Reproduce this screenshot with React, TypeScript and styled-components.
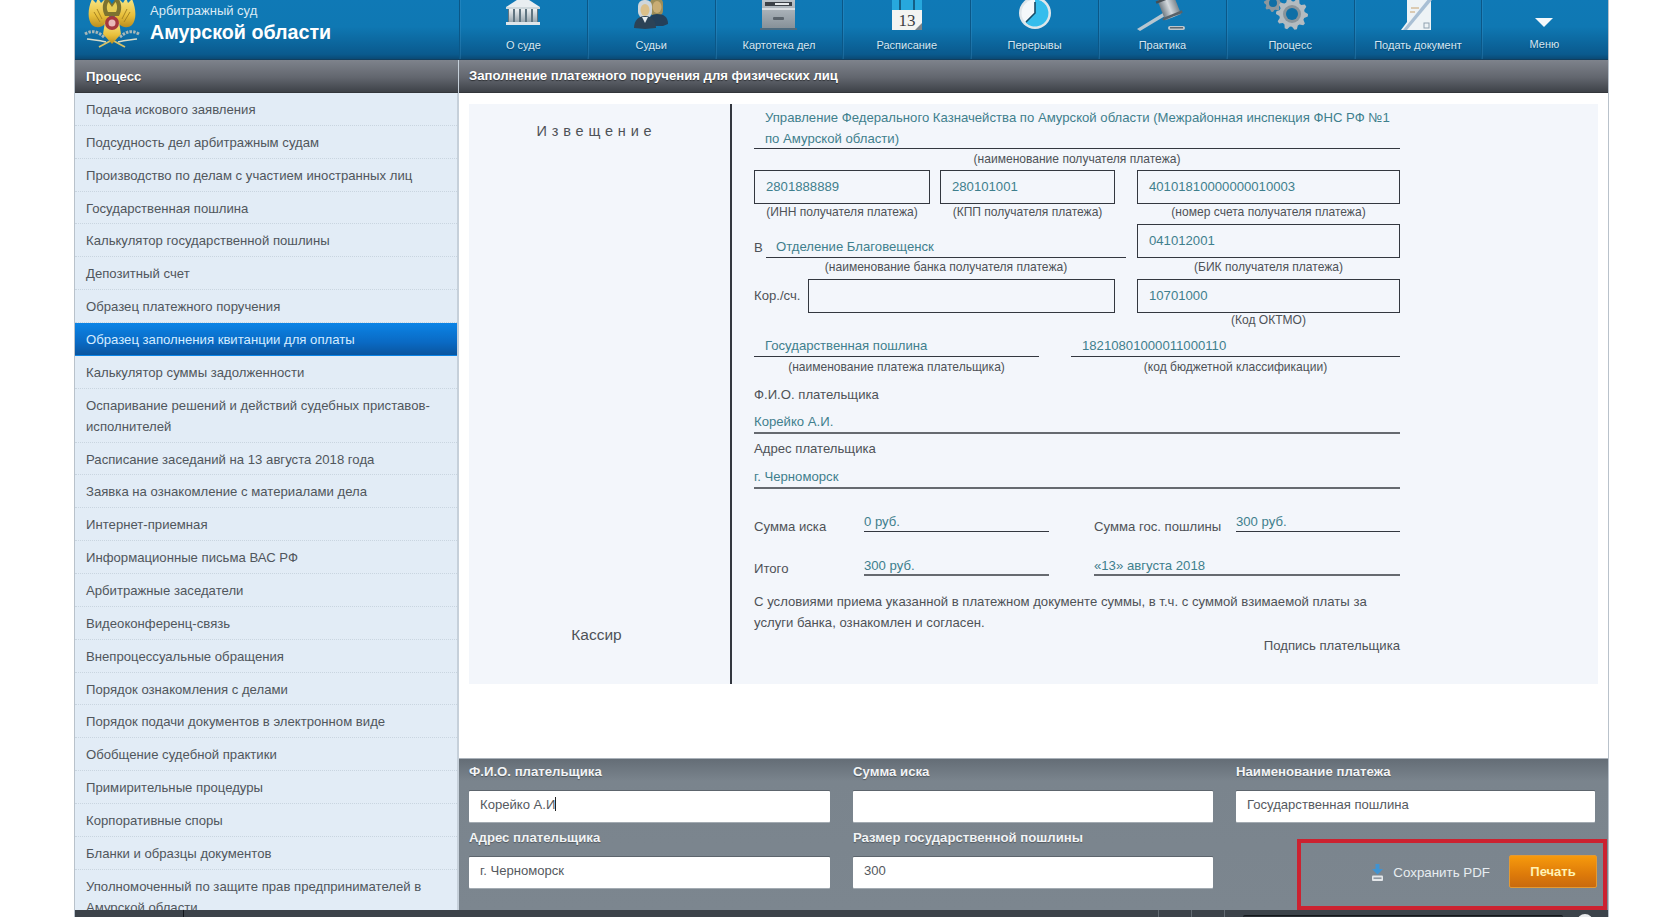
import React from "react";
import styled, { createGlobalStyle } from "styled-components";

const Global = createGlobalStyle`
  html, body { margin: 0; padding: 0; background: #fff; height: 100%; overflow: hidden; }
  #root { height: 917px; }
  * { box-sizing: border-box; }
`;

const Page = styled.div`
  width: 1680px; height: 917px; padding-left: 74px; overflow: hidden;
  font-family: "Liberation Sans", Arial, sans-serif; font-size: 13.15px; color: #4a4f55;
`;
const Shell = styled.div`
  width: 1535px; height: 917px; display: flex; flex-direction: column;
  border-left: 1px solid #b9c2cb; border-right: 1px solid #b9c2cb;
`;
const Header = styled.header`
  flex: 0 0 60px; display: flex;
  background: linear-gradient(#0f79b6 0%, #0f78b3 45%, #0a5a8e 92%, #0a4a75 100%);
  border-bottom: 1px solid #123f5f; overflow: hidden;
`;
const Brand = styled.div`
  flex: 0 0 384px; display: flex; align-items: flex-start; padding-left: 8px; gap: 9px;
`;
const BrandText = styled.div`
  padding-top: 2px; color: #fff;
`;
const CourtKind = styled.div`
  font-size: 13px; line-height: 18px; color: #dcebf5;
`;
const CourtName = styled.div`
  font-size: 19.7px; line-height: 24px; font-weight: 700; color: #fff;
`;
const NavItem = styled.a<{ $wide?: boolean }>`
  flex: 0 0 ${p => (p.$wide ? "125px" : "127.8px")}; display: flex; flex-direction: column; align-items: center;
  border-left: 1px solid #0b5787; box-shadow: inset 1px 0 0 rgba(90,170,220,.22);
`;
const IconSlot = styled.div<{ $short?: boolean }>`
  height: ${p => (p.$short ? 38 : 39)}px; display: flex; align-items: flex-start; justify-content: center;
`;
const NavLabel = styled.span`
  font-size: 11px; line-height: 13px; color: #d5e7f3; text-shadow: 0 1px 1px rgba(0,40,70,.5);
`;
const MenuArrow = styled.i`
  display: block; width: 0; height: 0; margin-top: 18px;
  border-left: 9px solid transparent; border-right: 9px solid transparent; border-top: 9px solid #f4f8fb;
`;
const Body = styled.div`
  flex: 1; display: flex; min-height: 0;
`;
const Side = styled.aside`
  flex: 0 0 383px; display: flex; flex-direction: column; overflow: hidden;
  background: #e2ecf6;
`;
const TitleBar = styled.div`
  flex: 0 0 33px; display: flex; align-items: center; padding-left: 11px;
  font-weight: 700; font-size: 13.15px; color: #fff; text-shadow: 0 1px 1px rgba(0,0,0,.5);
  background: linear-gradient(#7e838c, #62666e 55%, #3e4248);
  border-bottom: 1px solid #33363b;
`;
const MainTitle = styled(TitleBar)`
  padding-left: 10px; margin-top: 0; align-items: flex-start; padding-top: 8px; line-height: 15px;
`;
const MenuList = styled.nav`
  flex: 1; overflow: hidden; border-right: 1px solid #c6d0da;
`;
const MenuRow = styled.a<{ $active?: boolean; $double?: boolean }>`
  display: block; padding: 6px 20px 0 11px; line-height: 21px; font-size: 13.15px;
  height: ${p => (p.$double ? "53.86px" : "32.86px")};
  color: ${p => (p.$active ? "#d4ecff" : "#50565c")};
  background: ${p => (p.$active ? "linear-gradient(#0b84e6, #0a6ac4 60%, #0a559f)" : "transparent")};
  border-bottom: 1px dotted ${p => (p.$active ? "transparent" : "#c9d5e0")};
`;
const Main = styled.main`
  flex: 1; display: flex; flex-direction: column; min-width: 0;
  border-left: 1px solid #c6d0da;
`;
const Sheet = styled.div`
  flex: 1; padding: 11px 10px 0 10px; background: #fff;
`;
const Card = styled.div`
  height: 580px; display: flex; background: #f3f6fb;
`;
const Stub = styled.div`
  flex: 0 0 263px; border-right: 2px solid #33373f; display: flex; flex-direction: column;
  justify-content: space-between; align-items: center; padding: 17px 6px 39px 0;
`;
const StubTitle = styled.div`
  font-size: 14.5px; line-height: 20px; letter-spacing: 4.8px; color: #4e5257;
`;
const Cashier = styled.div`
  font-size: 15.5px; line-height: 20px; color: #4e5257;
`;
const Form = styled.div`
  margin-left: 22px; width: 646px; padding-top: 3px;
`;
const Recipient = styled.div`
  padding-left: 11px; line-height: 21px; color: #3f7f8d; font-size: 13.15px;
  border-bottom: 1px solid #33373f; height: 42px;
`;
const Caption = styled.div<{ $h?: number; $shift?: number }>`
  font-size: 12.05px; line-height: ${p => p.$h ?? 16}px; height: ${p => p.$h ?? 16}px; text-align: center; color: #4e5257;
  white-space: nowrap; padding-left: ${p => p.$shift ?? 0}px;
`;
const FieldRow = styled.div<{ $top?: number }>`
  display: flex; margin-top: ${p => p.$top ?? 0}px;
`;
const Field = styled.div<{ $w: number; $gap?: number; $push?: boolean }>`
  flex: 0 0 ${p => p.$w}px; width: ${p => p.$w}px;
  margin-left: ${p => (p.$push ? "auto" : `${p.$gap ?? 0}px`)};
`;
const BoxValue = styled.div`
  flex: 1; height: 34px; border: 1px solid #33373f; padding-left: 11px; line-height: 32px; color: #3f7f8d; font-size: 13.15px;
`;
const Inline = styled.div<{ $h?: number; $top?: number }>`
  display: flex; align-items: flex-end; height: ${p => p.$h ?? 34}px; margin-top: ${p => p.$top ?? 0}px;
`;
const PlainLabel = styled.span<{ $w?: number }>`
  flex: 0 0 ${p => p.$w ?? 12}px; line-height: 21px; font-size: 13.15px; color: #4e5257; white-space: nowrap;
`;
const LabelCell = styled(PlainLabel)`
  align-self: center; line-height: 30px;
`;
const Underlined = styled.div<{ $pad?: number; $thick?: boolean }>`
  flex: 1; height: ${p => (p.$thick ? 23 : 22)}px; line-height: 21px; color: #3f7f8d; font-size: 13.15px;
  padding-left: ${p => p.$pad ?? 11}px;
  border-bottom: ${p => (p.$thick ? "2px solid #666a70" : "1px solid #33373f")};
`;
const Line = styled.div<{ $top: number }>`
  margin-top: ${p => p.$top}px; line-height: 21px; color: #4e5257; font-size: 13.15px;
`;
const AmountRow = styled.div<{ $top: number }>`
  display: flex; align-items: flex-end; margin-top: ${p => p.$top}px; height: 21px;
`;
const AmountLabel = styled.span<{ $w: number; $gap?: number; $drop?: number }>`
  flex: 0 0 ${p => p.$w}px; margin-left: ${p => p.$gap ?? 0}px; margin-bottom: ${p => -(p.$drop ?? 5)}px; line-height: 21px;
  color: #4e5257; font-size: 13.15px; white-space: nowrap;
`;
const AmountValue = styled.span<{ $w: number; $gap?: number; $grey?: boolean }>`
  flex: 0 0 ${p => p.$w}px; margin-left: ${p => p.$gap ?? 0}px; height: 21px; line-height: 21px; color: #3f7f8d; font-size: 13.15px;
  border-bottom: ${p => (p.$grey ? "2px solid #666a70" : "1px solid #33373f")};
`;
const Signature = styled.div`
  margin-top: 2px; line-height: 21px; text-align: right; color: #4e5257; font-size: 13.15px;
`;
const Panel = styled.section`
  position: relative; flex: 0 0 152px; padding: 3px 0 0 10px;
  background: linear-gradient(#646d76, #7a848d 22px, #7c868f);
  border-top: 1px solid #aab2ba;
  display: grid; grid-template-columns: 361px 360px 359px; column-gap: 23px; grid-auto-rows: 66px;
  align-content: start;
`;
const PanelCell = styled.div`
  display: flex; flex-direction: column;
`;
const PanelLabel = styled.label`
  height: 20px; line-height: 20px; margin-bottom: 9px; font-weight: 700; font-size: 13.2px; color: #f2f4f6;
  text-shadow: 0 1px 1px rgba(0,0,0,.35);
`;
const InputLook = styled.div`
  height: 31px; background: #fff; padding-left: 11px; line-height: 28px; font-size: 13.1px; color: #55595e;
  box-shadow: 0 -1px 0 #5d656d, 0 1px 0 #a3abb2; border-radius: 1px;
`;
const Caret = styled.i`
  display: inline-block; width: 1px; height: 14px; background: #222; vertical-align: -2px;
`;
const Actions = styled.div`
  display: flex; justify-content: flex-end; align-items: center; padding-top: 26px; height: 60px; margin-right: -2px;
`;
const SavePdf = styled.a`
  display: flex; align-items: center; gap: 9px; margin: 3px 19px 0 0; color: #e8edf1; font-size: 13.35px;
`;
const PrintBtn = styled.button`
  width: 88px; height: 33px; border: 1px solid #e39a34; border-radius: 2px; padding: 0;
  background: linear-gradient(#f79a0c, #dd7a0a 60%, #c96a0e);
  color: #fff3b5; font: 700 13px "Liberation Sans", Arial, sans-serif;
`;
const RedFrame = styled.div`
  position: absolute; left: 838px; top: 80px; width: 310px; height: 71px;
  border: 4px solid #cc2230; pointer-events: none;
`;
const Footer = styled.footer`
  flex: 0 0 7px; display: flex; align-items: stretch; background: #3c434a; overflow: hidden; position: relative;
`;
const Tick = styled.i<{ $gap: number; $dark?: boolean }>`
  display: block; width: 1px; margin-left: ${p => p.$gap}px; background: ${p => (p.$dark ? "#11151a" : "#626a72")};
`;
const SearchEdge = styled.i`
  display: block; width: 320px; margin-left: 18px; margin-top: 5px; background: #2a2f35; border-top: 1px solid #14181c; border-radius: 2px 2px 0 0;
`;
const Knob = styled.i`
  display: block; width: 16px; height: 16px; margin-left: 14px; margin-top: 4px; border-radius: 50%; background: #e8eaec;
`;

const Crest = () => (
  <svg width="58" height="50" viewBox="0 0 58 50">
    <defs>
      <linearGradient id="gold" x1="0" y1="0" x2="0" y2="1">
        <stop offset="0" stopColor="#f9e788" /><stop offset=".6" stopColor="#e8bf3a" /><stop offset="1" stopColor="#b98d20" />
      </linearGradient>
    </defs>
    <g stroke="#b9c0bb" strokeWidth="3" fill="none" strokeDasharray="2.5 1.2" opacity=".9">
      <path d="M2 34C9 30 15 31 22 38" />
      <path d="M56 34C49 30 43 31 36 38" />
    </g>
    <g stroke="#d9dcc8" strokeWidth="1.4" fill="none">
      <path d="M4 39C11 40 16 40 23 42" />
      <path d="M54 39C47 40 42 40 35 42" />
    </g>
    <path d="M16 47L29 40L42 47" stroke="#d8c268" strokeWidth="1.8" fill="none" />
    <path d="M27 13C26 24 16 31 9 25C4 19 5 8 9 -1L13 3L15 -2L18 3L22 -1C21 5 23 9 27 13Z" fill="url(#gold)" />
    <path d="M31 13C32 24 42 31 49 25C54 19 53 8 49 -1L45 3L43 -2L40 3L36 -1C37 5 35 9 31 13Z" fill="url(#gold)" />
    <path d="M22 22H36L38 34L29 44L20 34Z" fill="url(#gold)" />
    <path d="M22 16C18 8 20 1 24 -3L29 4L34 -3C38 1 40 8 36 16Z" fill="#7c7230" />
    <path d="M25 12C23 8 24 4 25.5 2L29 7L32.500 2C34 4 35 8 33 12Z" fill="#e7cd55" />
    <circle cx="29" cy="23" r="7" fill="#a6383d" />
    <circle cx="29" cy="23" r="3.500" fill="#e9b9b9" />
    <path d="M14 9L19 19M44 9L39 19M11 12L17 22M47 12L41 22" stroke="#a88422" strokeWidth="1" />
  </svg>
);

const BuildingIcon = () => (
  <svg width="40" height="27" viewBox="0 0 40 27">
    <defs><linearGradient id="stone" x1="0" y1="0" x2="0" y2="1"><stop offset="0" stopColor="#eef2f4" /><stop offset="1" stopColor="#98a6ae" /></linearGradient></defs>
    <path d="M3 7L17 -2H23L37 7Z" fill="#e9eef1" />
    <rect x="3" y="7" width="34" height="2" fill="#cfd8dc" />
    <rect x="5" y="9" width="30" height="13" fill="#5f7480" />
    {[6, 12, 18, 24, 30].map(x => <rect key={x} x={x} y="9" width="4" height="13" fill="url(#stone)" />)}
    <rect x="3" y="22" width="34" height="3" fill="#dfe6ea" />
  </svg>
);
const JudgesIcon = () => (
  <svg width="36" height="29" viewBox="0 0 36 29">
    <rect x="17" y="-2" width="13" height="18" rx="5" fill="#9c8d58" />
    <ellipse cx="24" cy="7" rx="4.5" ry="6" fill="#c9ad74" />
    <path d="M15 24C15 17 19 14 24 14C31 14 35 17 35 24L30 26H18Z" fill="#24405a" />
    <rect x="5" y="0" width="14" height="18" rx="6" fill="#cfd6da" />
    <ellipse cx="12" cy="10" rx="4.5" ry="6" fill="#dcc08a" />
    <path d="M1 28C1 20 6 16 12 16C18 16 23 20 23 28L12 29Z" fill="#2c4256" />
    <path d="M9 17L12 23L15 17Z" fill="#e7edf0" />
  </svg>
);
const CabinetIcon = () => (
  <svg width="40" height="31" viewBox="0 0 40 31">
    <defs><linearGradient id="cab" x1="0" y1="0" x2="0" y2="1"><stop offset="0" stopColor="#bcc3c9" /><stop offset="1" stopColor="#858f97" /></linearGradient></defs>
    <rect x="3" y="0" width="33" height="29" fill="url(#cab)" />
    <rect x="6" y="2" width="27" height="4" fill="#3c4147" />
    <rect x="16" y="3" width="14" height="2" fill="#e6e9eb" />
    <rect x="3" y="8" width="33" height="2" fill="#d9dde0" />
    <rect x="14" y="17" width="11" height="3" rx="1" fill="#5a636b" />
    <rect x="1" y="28" width="37" height="2" fill="#4d6a7e" />
  </svg>
);
const CalendarIcon = () => (
  <svg width="36" height="32" viewBox="0 0 36 32">
    <rect x="3" y="-2" width="30" height="12" fill="#27a8dd" />
    <rect x="10" y="-2" width="2" height="12" fill="#145f86" />
    <rect x="24" y="-2" width="2" height="12" fill="#145f86" />
    <rect x="3" y="10" width="30" height="20" fill="#f3f4f2" />
    <text x="18" y="26" textAnchor="middle" fontFamily="Liberation Serif, serif" fontSize="17" fill="#3b3f44">13</text>
    <path d="M33 23V30H26Z" fill="#7d8489" />
  </svg>
);
const ClockIcon = () => (
  <svg width="34" height="31" viewBox="0 0 34 31">
    <circle cx="17" cy="13" r="16" fill="#dfe6ea" />
    <circle cx="17" cy="13" r="13.5" fill="#f4f8fa" />
    <path d="M17 13V-.5A13.5 13.5 0 1 1 7.5 22.6Z" fill="#35bdec" />
    <path d="M17 2V13L8 22" stroke="#174b66" strokeWidth="1.6" fill="none" />
  </svg>
);
const GavelIcon = () => (
  <svg width="54" height="32" viewBox="0 0 54 32">
    <defs><linearGradient id="steel" x1="0" y1="0" x2="1" y2="0"><stop offset="0" stopColor="#727c84" /><stop offset=".5" stopColor="#d5dade" /><stop offset="1" stopColor="#7c868d" /></linearGradient></defs>
    <path d="M2 29L28 13L30 16L5 31Z" fill="#b7c6d0" />
    <g transform="rotate(-22 34 8)">
      <rect x="26" y="-3" width="17" height="21" fill="url(#steel)" />
      <rect x="24" y="-3" width="21" height="2.5" fill="#454d54" />
      <rect x="24" y="15" width="21" height="2.5" fill="#596269" />
    </g>
    <rect x="33" y="26" width="17" height="4" rx="2" fill="#bcc6cc" />
    <rect x="35" y="27" width="13" height="1.5" fill="#5d6870" />
  </svg>
);
const gearPath = (cx: number, cy: number, r: number, teeth: number) => {
  const pts: string[] = [];
  const n = teeth * 4;
  for (let i = 0; i < n; i++) {
    const a = (i / n) * Math.PI * 2;
    const rad = i % 4 < 2 ? r : r * 0.8;
    pts.push(`${(cx + rad * Math.cos(a)).toFixed(1)},${(cy + rad * Math.sin(a)).toFixed(1)}`);
  }
  return pts.join(" ");
};
const GearsIcon = () => (
  <svg width="56" height="32" viewBox="0 0 56 32">
    <polygon points={gearPath(11, 3, 9, 8)} fill="#8d979d" />
    <circle cx="11" cy="3" r="4" fill="#0f6fa6" />
    <polygon points={gearPath(30, 14, 16, 10)} fill="#b3bbc0" />
    <circle cx="30" cy="14" r="9" fill="#8a949a" />
    <circle cx="30" cy="14" r="6" fill="#0f6fa6" />
  </svg>
);
const DocIcon = () => (
  <svg width="38" height="32" viewBox="0 0 38 32">
    <path d="M8 -2H32V30H2L8 22Z" fill="#eef3f6" />
    <path d="M4 30L30 -2L33 0L8 30Z" fill="#a9bfd4" />
    <path d="M12 8H20M11 12H16" stroke="#c9a26e" strokeWidth="1" />
    <rect x="25" y="23" width="5" height="5" fill="none" stroke="#8fa2b0" />
  </svg>
);
const SaveIcon = () => (
  <svg width="13" height="18" viewBox="0 0 13 18">
    <path d="M4.500 0H8.500V5H12L6.500 10.500L1 5H4.500Z" fill="#3f93d2" />
    <rect x="1" y="11.500" width="11" height="5.500" rx="1" fill="#e4e7ea" />
    <rect x="2.500" y="13.500" width="8" height="1.300" fill="#7c868f" />
  </svg>
);

const navItems: [string, React.ReactNode][] = [
  ["О суде", <BuildingIcon />],
  ["Судьи", <JudgesIcon />],
  ["Картотека дел", <CabinetIcon />],
  ["Расписание", <CalendarIcon />],
  ["Перерывы", <ClockIcon />],
  ["Практика", <GavelIcon />],
  ["Процесс", <GearsIcon />],
  ["Подать документ", <DocIcon />],
];

const menu: string[] = [
  "Подача искового заявления",
  "Подсудность дел арбитражным судам",
  "Производство по делам с участием иностранных лиц",
  "Государственная пошлина",
  "Калькулятор государственной пошлины",
  "Депозитный счет",
  "Образец платежного поручения",
  "Образец заполнения квитанции для оплаты",
  "Калькулятор суммы задолженности",
  "Оспаривание решений и действий судебных приставов-исполнителей",
  "Расписание заседаний на 13 августа 2018 года",
  "Заявка на ознакомление с материалами дела",
  "Интернет-приемная",
  "Информационные письма ВАС РФ",
  "Арбитражные заседатели",
  "Видеоконференц-связь",
  "Внепроцессуальные обращения",
  "Порядок ознакомления с делами",
  "Порядок подачи документов в электронном виде",
  "Обобщение судебной практики",
  "Примирительные процедуры",
  "Корпоративные споры",
  "Бланки и образцы документов",
  "Уполномоченный по защите прав предпринимателей в Амурской области",
];

export default function App() {
  return (
    <Page>
      <Global />
      <Shell>
        <Header>
          <Brand>
            <Crest />
            <BrandText>
              <CourtKind>Арбитражный суд</CourtKind>
              <CourtName>Амурской области</CourtName>
            </BrandText>
          </Brand>
          {navItems.map(([label, icon]) => (
            <NavItem key={label}>
              <IconSlot>{icon}</IconSlot>
              <NavLabel>{label}</NavLabel>
            </NavItem>
          ))}
          <NavItem $wide>
            <IconSlot $short><MenuArrow /></IconSlot>
            <NavLabel>Меню</NavLabel>
          </NavItem>
        </Header>
        <Body>
          <Side>
            <TitleBar>Процесс</TitleBar>
            <MenuList>
              {menu.map((m, i) => (
                <MenuRow key={m} $active={i === 7} $double={i === 9 || i === 23}>{m}</MenuRow>
              ))}
            </MenuList>
          </Side>
          <Main>
            <MainTitle>Заполнение платежного поручения для физических лиц</MainTitle>
            <Sheet>
              <Card>
                <Stub>
                  <StubTitle>Извещение</StubTitle>
                  <Cashier>Кассир</Cashier>
                </Stub>
                <Form>
                  <Recipient>Управление Федерального Казначейства по Амурской области (Межрайонная инспекция ФНС РФ №1 по Амурской области)</Recipient>
                  <Caption $h={21}>(наименование получателя платежа)</Caption>
                  <FieldRow>
                    <Field $w={176}>
                      <BoxValue>2801888889</BoxValue>
                      <Caption>(ИНН получателя платежа)</Caption>
                    </Field>
                    <Field $w={175} $gap={10}>
                      <BoxValue>280101001</BoxValue>
                      <Caption>(КПП получателя платежа)</Caption>
                    </Field>
                    <Field $w={263} $push>
                      <BoxValue>40101810000000010003</BoxValue>
                      <Caption>(номер счета получателя платежа)</Caption>
                    </Field>
                  </FieldRow>
                  <FieldRow $top={4}>
                    <Field $w={372}>
                      <Inline>
                        <PlainLabel>В</PlainLabel>
                        <Underlined $pad={10}>Отделение Благовещенск</Underlined>
                      </Inline>
                      <Caption $h={18} $shift={12}>(наименование банка получателя платежа)</Caption>
                    </Field>
                    <Field $w={263} $push>
                      <BoxValue>041012001</BoxValue>
                      <Caption $h={18}>(БИК получателя платежа)</Caption>
                    </Field>
                  </FieldRow>
                  <FieldRow $top={3}>
                    <Field $w={361}>
                      <Inline>
                        <LabelCell $w={54}>Кор./сч.</LabelCell>
                        <BoxValue />
                      </Inline>
                    </Field>
                    <Field $w={263} $push>
                      <BoxValue>10701000</BoxValue>
                      <Caption $h={15}>(Код ОКТМО)</Caption>
                    </Field>
                  </FieldRow>
                  <FieldRow $top={7}>
                    <Field $w={285}>
                      <Inline $h={22}><Underlined>Государственная пошлина</Underlined></Inline>
                      <Caption $h={21}>(наименование платежа плательщика)</Caption>
                    </Field>
                    <Field $w={329} $push>
                      <Inline $h={22}><Underlined>18210801000011000110</Underlined></Inline>
                      <Caption $h={21}>(код бюджетной классификации)</Caption>
                    </Field>
                  </FieldRow>
                  <Line $top={6}>Ф.И.О. плательщика</Line>
                  <Inline $h={23} $top={6}><Underlined $pad={0} $thick>Корейко А.И.</Underlined></Inline>
                  <Line $top={4}>Адрес плательщика</Line>
                  <Inline $h={23} $top={7}><Underlined $pad={0} $thick>г. Черноморск</Underlined></Inline>
                  <AmountRow $top={22}>
                    <AmountLabel $w={110}>Сумма иска</AmountLabel>
                    <AmountValue $w={185}>0 руб.</AmountValue>
                    <AmountLabel $w={142} $gap={45}>Сумма гос. пошлины</AmountLabel>
                    <AmountValue $w={164}>300 руб.</AmountValue>
                  </AmountRow>
                  <AmountRow $top={23}>
                    <AmountLabel $w={110} $drop={3}>Итого</AmountLabel>
                    <AmountValue $w={185} $grey>300 руб.</AmountValue>
                    <AmountValue $w={306} $gap={45} $grey>«13» августа 2018</AmountValue>
                  </AmountRow>
                  <Line $top={15}>С условиями приема указанной в платежном документе суммы, в т.ч. с суммой взимаемой платы за услуги банка, ознакомлен и согласен.</Line>
                  <Signature>Подпись плательщика</Signature>
                </Form>
              </Card>
            </Sheet>
            <Panel>
              <PanelCell>
                <PanelLabel>Ф.И.О. плательщика</PanelLabel>
                <InputLook>Корейко А.И<Caret /></InputLook>
              </PanelCell>
              <PanelCell>
                <PanelLabel>Сумма иска</PanelLabel>
                <InputLook />
              </PanelCell>
              <PanelCell>
                <PanelLabel>Наименование платежа</PanelLabel>
                <InputLook>Государственная пошлина</InputLook>
              </PanelCell>
              <PanelCell>
                <PanelLabel>Адрес плательщика</PanelLabel>
                <InputLook>г. Черноморск</InputLook>
              </PanelCell>
              <PanelCell>
                <PanelLabel>Размер государственной пошлины</PanelLabel>
                <InputLook>300</InputLook>
              </PanelCell>
              <Actions>
                <SavePdf><SaveIcon />Сохранить PDF</SavePdf>
                <PrintBtn>Печать</PrintBtn>
              </Actions>
              <RedFrame />
            </Panel>
          </Main>
        </Body>
        <Footer>
          <Tick $gap={108} $dark />
          <Tick $gap={974} />
          <Tick $gap={32} />
          <Tick $gap={32} />
          <SearchEdge />
          <Knob />
        </Footer>
      </Shell>
    </Page>
  );
}
